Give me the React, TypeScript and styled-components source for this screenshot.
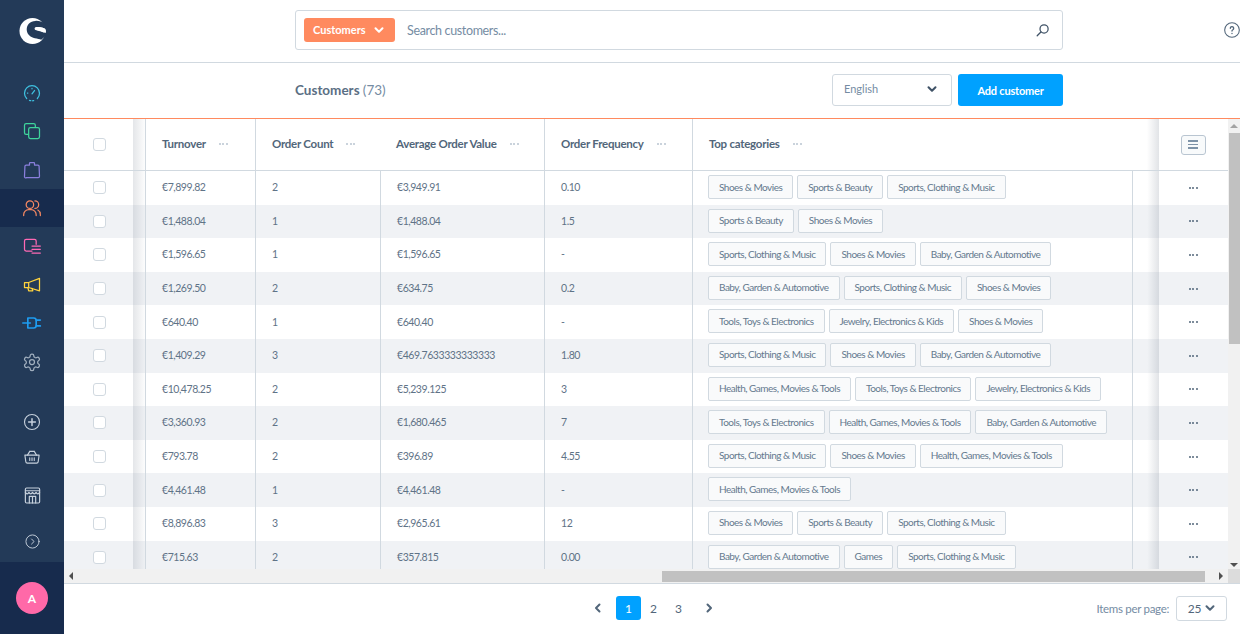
import React from 'react';
import styled, { createGlobalStyle } from 'styled-components';

const Global = createGlobalStyle`
  html, body { margin: 0; padding: 0; height: 634px; overflow: hidden; background: #fff; }
  body { font-family: Lato, "Open Sans", sans-serif; font-size: 12px; color: #52667a; }
  * { box-sizing: border-box; }
`;

const line = '#d1d9e0';
const cols = '69px 12px 110px 125px 164px 148px 440px 27px 69px';

const Page = styled.div`display: flex; width: 1240px; height: 634px; overflow: hidden;`;

const Sidebar = styled.nav`
  width: 64px; flex: none; height: 634px; background: #233a58;
  display: flex; flex-direction: column; align-items: stretch;
`;
const LogoBox = styled.div`height: 73.6px; flex: none; padding-top: 18px; display: flex; justify-content: center; align-items: flex-start;`;
const NavItem = styled.div<{ $active?: boolean; $h?: number }>`
  height: ${p => p.$h ?? 38.4}px; flex: none;
  display: flex; align-items: center; justify-content: center;
  background: ${p => (p.$active ? '#172b4d' : 'transparent')};
`;
const NavGap = styled.div<{ $h: number }>`height: ${p => p.$h}px; flex: none;`;
const SideFoot = styled.div`
  margin-top: auto; height: 72px; flex: none; background: #172b4d;
  display: flex; align-items: center; justify-content: center;
`;
const Avatar = styled.div`
  width: 32px; height: 32px; border-radius: 50%; background: #ff69a8; color: #fff;
  display: flex; align-items: center; justify-content: center; font-size: 12px; font-weight: 700;
`;

const Main = styled.main`flex: 1; min-width: 0; display: flex; flex-direction: column; height: 634px;`;

const TopBar = styled.header`
  height: 63px; flex: none; border-bottom: 1px solid ${line};
  display: flex; align-items: flex-start; padding: 10px 0 0 231px; position: relative;
`;
const SearchBox = styled.div`
  width: 768px; height: 40px; border: 1px solid ${line}; border-radius: 3px;
  display: flex; align-items: center; padding: 0 12px 0 8px;
`;
const TypePill = styled.div`
  width: 91px; height: 24px; background: #ff8a5f; color: #fff; border-radius: 3px;
  display: flex; align-items: center; padding: 0 11px 1px 9px; justify-content: space-between;
  font-size: 11px; font-weight: 700;
`;
const SearchText = styled.span`margin-left: 12px; flex: 1; color: #758ca3; font-size: 12.5px; letter-spacing: -0.35px;`;
const HelpIcon = styled.div`position: absolute; right: 0; top: 22px; width: 16px; height: 16px;`;

const SmartBar = styled.div`
  height: 56px; flex: none; border-bottom: 1px solid #ff8a5f;
  display: flex; align-items: center; padding: 0 177px 1px 231px;
`;
const Title = styled.h1`margin: 0; flex: 1; font-size: 13.5px; font-weight: 700; color: #5b6f84;`;
const Count = styled.span`font-weight: 400; color: #758ca3;`;
const LangSelect = styled.div`
  width: 120px; height: 32px; border: 1px solid ${line}; border-radius: 3px;
  display: flex; align-items: center; justify-content: space-between; padding: 0 14px 3px 11px;
  color: #758ca3; font-size: 11px; margin-right: 6px;
`;
const PrimaryBtn = styled.button`
  width: 105px; height: 32px; border: 0; border-radius: 3px; background: #00a1ff; color: #fff;
  font: 700 11px Lato, sans-serif; letter-spacing: -0.2px; padding: 0;
`;

const TableArea = styled.section`height: 450px; flex: none; display: flex;`;
const TableClip = styled.div`width: 1164px; height: 450px; overflow: hidden; flex: none;`;
const Grid = styled.div<{ $odd?: boolean; $head?: boolean }>`
  display: grid; grid-template-columns: ${cols};
  height: ${p => (p.$head ? '52px' : '33.6px')};
  background: ${p => (p.$odd ? '#f0f2f5' : '#fff')};
  ${p => (p.$head ? `border-bottom: 1px solid ${line};` : '')}
`;
const Cell = styled.div<{ $border?: boolean }>`
  display: flex; align-items: center; min-width: 0; white-space: nowrap; overflow: hidden;
  padding: 0 0 1px 16px;
  border-left: ${p => (p.$border ? `1px solid ${line}` : '0 none')};
  color: #5f7387; font-size: 10.5px; letter-spacing: -0.45px;
`;
const CheckCell = styled.div`display: flex; align-items: center; justify-content: center; padding-left: 2px;`;
const ShadeCell = styled.div`background: linear-gradient(to right, rgba(120,130,145,.2), rgba(120,130,145,.02));`;
const EdgeCell = styled.div<{ $border?: boolean }>`
  border-left: ${p => (p.$border ? `1px solid ${line}` : '0 none')};
  background: linear-gradient(to right, rgba(120,130,145,0) 55%, rgba(120,130,145,.22));
`;
const ActionCell = styled.div`
  display: flex; align-items: center; justify-content: center; padding-right: 1px;
`;
const Check = styled.span`
  width: 13px; height: 13px; border: 1px solid ${line}; border-radius: 3px; background: #fff; display: block;
`;
const HeadCell = styled(Cell)`font-weight: 700; color: #52667a; font-size: 11.5px; letter-spacing: -0.25px; padding: 0 0 2px 16px;`;
const Dots = styled.span<{ $tone?: string; $gap?: number }>`
  display: inline-flex; gap: 1.5px; margin-left: ${p => p.$gap ?? 13}px;
  i { display: block; width: 2px; height: 2px; border-radius: 50%; background: ${p => p.$tone ?? '#b8c4d0'}; }
`;
const ColMenu = styled.div`
  width: 25px; height: 20px; border: 1px solid #b9c5d1; border-radius: 3px; background: #f8fafb;
  display: flex; flex-direction: column; align-items: center; justify-content: center; gap: 2px;
  span { display: block; width: 10px; height: 1.4px; background: #7e93a8; }
`;
const TagList = styled.div`display: flex; gap: 4px; margin-left: -1px; align-self: flex-start; padding-top: 4px;`;
const Tag = styled.span`
  height: 24px; padding: 0 10px 1px; border: 1px solid ${line}; background: #f9fafb; border-radius: 2px;
  display: inline-flex; align-items: center; font-size: 10px; letter-spacing: -0.5px; color: #64798e;
`;

const HBar = styled.div`
  height: 15px; flex: none; background: #f1f1f1; border-bottom: 1px solid ${line};
  display: flex; align-items: center;
`;
const HThumb = styled.div`height: 11px; width: 543px; margin-left: 589px; background: #c1c1c1; flex: none;`;
const Arrow = styled.span<{ $dir: 'l' | 'r' | 'u' | 'd' }>`
  width: 0; height: 0; display: block; flex: none;
  ${p => p.$dir === 'l' && 'border: 4px solid transparent; border-left: 0; border-right: 4px solid #505050; margin-left: 5px;'}
  ${p => p.$dir === 'r' && 'border: 4px solid transparent; border-right: 0; border-left: 4px solid #505050; margin-left: 14px;'}
  ${p => p.$dir === 'u' && 'border: 4px solid transparent; border-top: 0; border-bottom: 4px solid #a3a3a3; margin: 5px auto;'}
  ${p => p.$dir === 'd' && 'border: 4px solid transparent; border-bottom: 0; border-top: 4px solid #505050; margin: 5px auto 2px;'}
`;
const Corner = styled.div`width: 12px; height: 14px; background: #dcdcdc; margin-left: auto;`;
const VBar = styled.div`width: 12px; flex: none; background: #f1f1f1; display: flex; flex-direction: column; height: 450px;`;
const VThumb = styled.div`height: 211px; margin: 0 0 0 1px; background: #c1c1c1; flex: none;`;
const VSpacer = styled.div`flex: 1;`;

const Footer = styled.footer`flex: 1; display: flex; align-items: center; padding: 0 13px 2px 526px;`;
const NavArrow = styled.span`width: 16px; height: 16px; display: flex; align-items: center; justify-content: center;`;
const PageBtn = styled.span<{ $on?: boolean }>`
  width: 25px; height: 24px; border-radius: 3px; display: flex; align-items: center; justify-content: center;
  font-size: 12px; background: ${p => (p.$on ? '#00a1ff' : 'transparent')}; color: ${p => (p.$on ? '#fff' : '#52667a')};
`;
const Pager = styled.div`display: flex; align-items: center;`;
const PageNums = styled.div`display: flex; align-items: center; margin: 0 10px;`;
const PerPage = styled.div`margin-left: auto; display: flex; align-items: center; color: #758ca3; font-size: 11.5px; letter-spacing: -0.3px; gap: 7px;`;
const PerSelect = styled.div`
  width: 51px; height: 25px; border: 1px solid ${line}; border-radius: 3px; display: flex; align-items: center; justify-content: center; gap: 4px;
  color: #52667a; font-size: 12px;
`;

const Icon = ({ color, size = 20, sw = 1.5, children, vb = 24 }: { color: string; size?: number; sw?: number; vb?: number; children: React.ReactNode }) => (
  <svg width={size} height={size} viewBox={`0 0 ${vb} ${vb}`} fill="none" stroke={color} strokeWidth={sw} strokeLinecap="round" strokeLinejoin="round">{children}</svg>
);

const Chevron = ({ color, size = 10, sw = 2 }: { color: string; size?: number; sw?: number }) => (
  <svg width={size} height={size} viewBox="0 0 10 10" fill="none" stroke={color} strokeWidth={sw} strokeLinecap="round" strokeLinejoin="round"><path d="M1.5 3.2 5 6.8l3.5-3.6" /></svg>
);

const Logo = () => (
  <svg width="27" height="27" viewBox="0 0 28 28">
    <circle cx="14" cy="13.5" r="13.5" fill="#fff" />
    <path d="M28 6.5C24 3.8 20.5 2.8 17 3 11.5 3.3 8 6.8 8 12c0 4.5 3.5 8 8.5 9 2.5.5 5 .9 6.5 1.5l5-4V15c-3-1.2-6-1.8-8.5-2.1-2.2-.3-3.4-.9-3.3-2 .1-1.2 1.6-1.7 3.6-1.5 3 .2 6.5 1.2 9.2 2.6z" fill="#233a58" />
    <path d="M27.5 15.5c-1 0-5-1.5-8-2.5-2.5-.8-2.8-2.5-1.2-3.2 2.6-1 6.5 0 9.2 2 .6.8.6 3.2 0 3.7z" fill="#fff" />
  </svg>
);

const navTop: [string, React.ReactNode][] = [
  ['#3fc1e0', <><path d="M5.6 18.6a9 9 0 1 1 12.8 0" /><path d="M9 20.8a9 9 0 0 0 6 0" strokeDasharray="1.5 2" /><path d="m12 13 3-4" /><path d="M6.5 12H7M12 6.5V7" /></>],
  ['#3fd49c', <><rect x="3" y="3" width="13" height="13" rx="2" /><rect x="8" y="8" width="13" height="13" rx="2" fill="#233a58" /></>],
  ['#8a7fdc', <><path d="M5 6h4V4a1 1 0 0 1 1-1h4a1 1 0 0 1 1 1v2h4a1.5 1.5 0 0 1 1.5 1.5l.5 12a1.5 1.5 0 0 1-1.5 1.5h-14A1.5 1.5 0 0 1 3 19.5l.5-12A1.5 1.5 0 0 1 5 6z" /></>],
];
const navMid: [string, React.ReactNode][] = [
  ['#ff69b4', <><path d="M12 18H5a2 2 0 0 1-2-2V6a2 2 0 0 1 2-2h10a2 2 0 0 1 2 2v4" /><path d="M12 12h10M12 16h10M12 20.5h10" /></>],
  ['#ffd33d', <><path d="M3 9h5v6H3zM8 9l13-5v15L8 15" /><path d="M7 15l1 4h5l-1-3" /></>],
  ['#1e9cf0', <><path d="M7 6h7a3 3 0 0 1 3 3v6a3 3 0 0 1-3 3H7z" strokeWidth={2} /><path d="M1 12h9M17 8.5h5M17 15.5h5" strokeWidth={2} /></>],
];
const Gear = () => (
  <Icon color="#a2b0bf"><path d="M12.2 2.5h-.4a2 2 0 0 0-2 2v.2a2 2 0 0 1-1 1.7l-.4.3a2 2 0 0 1-2 0l-.2-.1a2 2 0 0 0-2.7.7l-.2.4a2 2 0 0 0 .7 2.7l.2.1a2 2 0 0 1 1 1.7v.5a2 2 0 0 1-1 1.7l-.2.1a2 2 0 0 0-.7 2.7l.2.4a2 2 0 0 0 2.7.7l.2-.1a2 2 0 0 1 2 0l.4.3a2 2 0 0 1 1 1.7v.2a2 2 0 0 0 2 2h.4a2 2 0 0 0 2-2v-.2a2 2 0 0 1 1-1.7l.4-.3a2 2 0 0 1 2 0l.2.1a2 2 0 0 0 2.7-.7l.2-.4a2 2 0 0 0-.7-2.7l-.2-.1a2 2 0 0 1-1-1.7v-.5a2 2 0 0 1 1-1.7l.2-.1a2 2 0 0 0 .7-2.7l-.2-.4a2 2 0 0 0-2.7-.7l-.2.1a2 2 0 0 1-2 0l-.4-.3a2 2 0 0 1-1-1.7v-.2a2 2 0 0 0-2-2z" /><circle cx="12" cy="12" r="3" /></Icon>
);

type Row = [string, string, string, string, string[]];
const A = 'Shoes & Movies', B = 'Sports & Beauty', C = 'Sports, Clothing & Music', D = 'Baby, Garden & Automotive', E = 'Tools, Toys & Electronics', F = 'Jewelry, Electronics & Kids', G = 'Health, Games, Movies & Tools';
const rows: Row[] = [
  ['€7,899.82', '2', '€3,949.91', '0.10', [A, B, C]],
  ['€1,488.04', '1', '€1,488.04', '1.5', [B, A]],
  ['€1,596.65', '1', '€1,596.65', '-', [C, A, D]],
  ['€1,269.50', '2', '€634.75', '0.2', [D, C, A]],
  ['€640.40', '1', '€640.40', '-', [E, F, A]],
  ['€1,409.29', '3', '€469.7633333333333', '1.80', [C, A, D]],
  ['€10,478.25', '2', '€5,239.125', '3', [G, E, F]],
  ['€3,360.93', '2', '€1,680.465', '7', [E, G, D]],
  ['€793.78', '2', '€396.89', '4.55', [C, A, G]],
  ['€4,461.48', '1', '€4,461.48', '-', [G]],
  ['€8,896.83', '3', '€2,965.61', '12', [A, B, C]],
  ['€715.63', '2', '€357.815', '0.00', [D, 'Games', C]],
];

const ThreeDots = ({ tone, gap }: { tone?: string; gap?: number }) => (
  <Dots $tone={tone} $gap={gap}><i /><i /><i /></Dots>
);

export default function App() {
  return (
    <Page>
      <Global />
      <Sidebar>
        <LogoBox><Logo /></LogoBox>
        {navTop.map(([c, d], i) => <NavItem key={i}><Icon color={c}>{d}</Icon></NavItem>)}
        <NavItem $active>
          <Icon color="#f58862"><circle cx="9.5" cy="8" r="4.5" /><path d="M2 21v-1a6 6 0 0 1 6-6h3a6 6 0 0 1 6 6v1" /><path d="M15.5 3.5a4.5 4.5 0 0 1 0 9M19 14.5a6 6 0 0 1 3 5.2V21" /></Icon>
        </NavItem>
        {navMid.map(([c, d], i) => <NavItem key={i}><Icon color={c}>{d}</Icon></NavItem>)}
        <NavItem><Gear /></NavItem>
        <NavGap $h={24} />
        <NavItem $h={34}><Icon color="#c6d0dc" size={18}><circle cx="12" cy="12" r="10" /><path d="M12 7.5v9M7.5 12h9" strokeWidth={2} /></Icon></NavItem>
        <NavItem $h={36}><Icon color="#c6d0dc" size={18}><path d="M2.5 9.5h19l-1.3 9a2 2 0 0 1-2 1.7H5.8a2 2 0 0 1-2-1.7z" /><path d="M6 9.5 9 4.5M18 9.5l-3-5M9 4.5h6M9 13v3.5M12 13v3.5M15 13v3.5" /></Icon></NavItem>
        <NavItem $h={42}><Icon color="#c6d0dc" size={19}><rect x="3" y="2.5" width="18" height="19" rx="1.5" /><path d="M3 8c1 2.5 3.5 2.5 4.5 0 1 2.5 3.5 2.5 4.5 0 1 2.5 3.5 2.5 4.5 0 1 2.5 3.5 2.5 4.5 0" /><path d="M8 21.5V13h8v8.500M12 13v8.500M3 6h18" /></Icon></NavItem>
        <NavGap $h={7} />
        <NavItem $h={36}><Icon color="#c6d0dc" size={15}><circle cx="12" cy="12" r="10.5" /><path d="m10.5 8 4 4-4 4" /></Icon></NavItem>
        <SideFoot><Avatar>A</Avatar></SideFoot>
      </Sidebar>

      <Main>
        <TopBar>
          <SearchBox>
            <TypePill>Customers <Chevron color="#fff" size={10} /></TypePill>
            <SearchText>Search customers...</SearchText>
            <Icon color="#3f5266" size={15} sw={2}><circle cx="14.5" cy="9.5" r="6.5" /><path d="m9.5 14.5-6 6" /></Icon>
          </SearchBox>
          <HelpIcon><Icon color="#52667a" size={16} sw={1.6}><circle cx="12" cy="12" r="11" /><path d="M9.5 9.5a2.5 2.5 0 1 1 3.8 2.1c-.9.5-1.3 1-1.3 2M12 17v.2" strokeWidth={2} /></Icon></HelpIcon>
        </TopBar>

        <SmartBar>
          <Title>Customers <Count>(73)</Count></Title>
          <LangSelect>English <Chevron color="#3f5266" size={10} /></LangSelect>
          <PrimaryBtn>Add customer</PrimaryBtn>
        </SmartBar>

        <TableArea>
          <TableClip>
            <Grid $head>
              <CheckCell><Check /></CheckCell>
              <ShadeCell />
              <HeadCell $border>Turnover<ThreeDots /></HeadCell>
              <HeadCell $border>Order Count<ThreeDots /></HeadCell>
              <HeadCell>Average Order Value<ThreeDots /></HeadCell>
              <HeadCell $border>Order Frequency<ThreeDots /></HeadCell>
              <HeadCell $border>Top categories<ThreeDots /></HeadCell>
              <EdgeCell />
              <ActionCell><ColMenu><span /><span /><span /></ColMenu></ActionCell>
            </Grid>
            {rows.map((r, i) => (
              <Grid key={i} $odd={i % 2 === 1}>
                <CheckCell><Check /></CheckCell>
                <ShadeCell />
                <Cell $border>{r[0]}</Cell>
                <Cell $border>{r[1]}</Cell>
                <Cell $border>{r[2]}</Cell>
                <Cell $border>{r[3]}</Cell>
                <Cell $border><TagList>{r[4].map(t => <Tag key={t}>{t}</Tag>)}</TagList></Cell>
                <EdgeCell $border />
                <ActionCell><ThreeDots tone="#52667a" gap={0} /></ActionCell>
              </Grid>
            ))}
          </TableClip>
          <VBar>
            <Arrow $dir="u" />
            <VThumb />
            <VSpacer />
            <Arrow $dir="d" />
          </VBar>
        </TableArea>

        <HBar>
          <Arrow $dir="l" />
          <HThumb />
          <Arrow $dir="r" />
          <Corner />
        </HBar>

        <Footer>
          <Pager>
            <NavArrow><svg width="10" height="10" viewBox="0 0 10 10" fill="none" stroke="#52667a" strokeWidth="2" strokeLinecap="round" strokeLinejoin="round"><path d="M6.5 1.5 3 5l3.5 3.5" /></svg></NavArrow>
            <PageNums>
              <PageBtn $on>1</PageBtn>
              <PageBtn>2</PageBtn>
              <PageBtn>3</PageBtn>
            </PageNums>
            <NavArrow><svg width="10" height="10" viewBox="0 0 10 10" fill="none" stroke="#52667a" strokeWidth="2" strokeLinecap="round" strokeLinejoin="round"><path d="M3.5 1.5 7 5 3.5 8.5" /></svg></NavArrow>
          </Pager>
          <PerPage>Items per page:<PerSelect>25 <Chevron color="#52667a" size={10} /></PerSelect></PerPage>
        </Footer>
      </Main>
    </Page>
  );
}
